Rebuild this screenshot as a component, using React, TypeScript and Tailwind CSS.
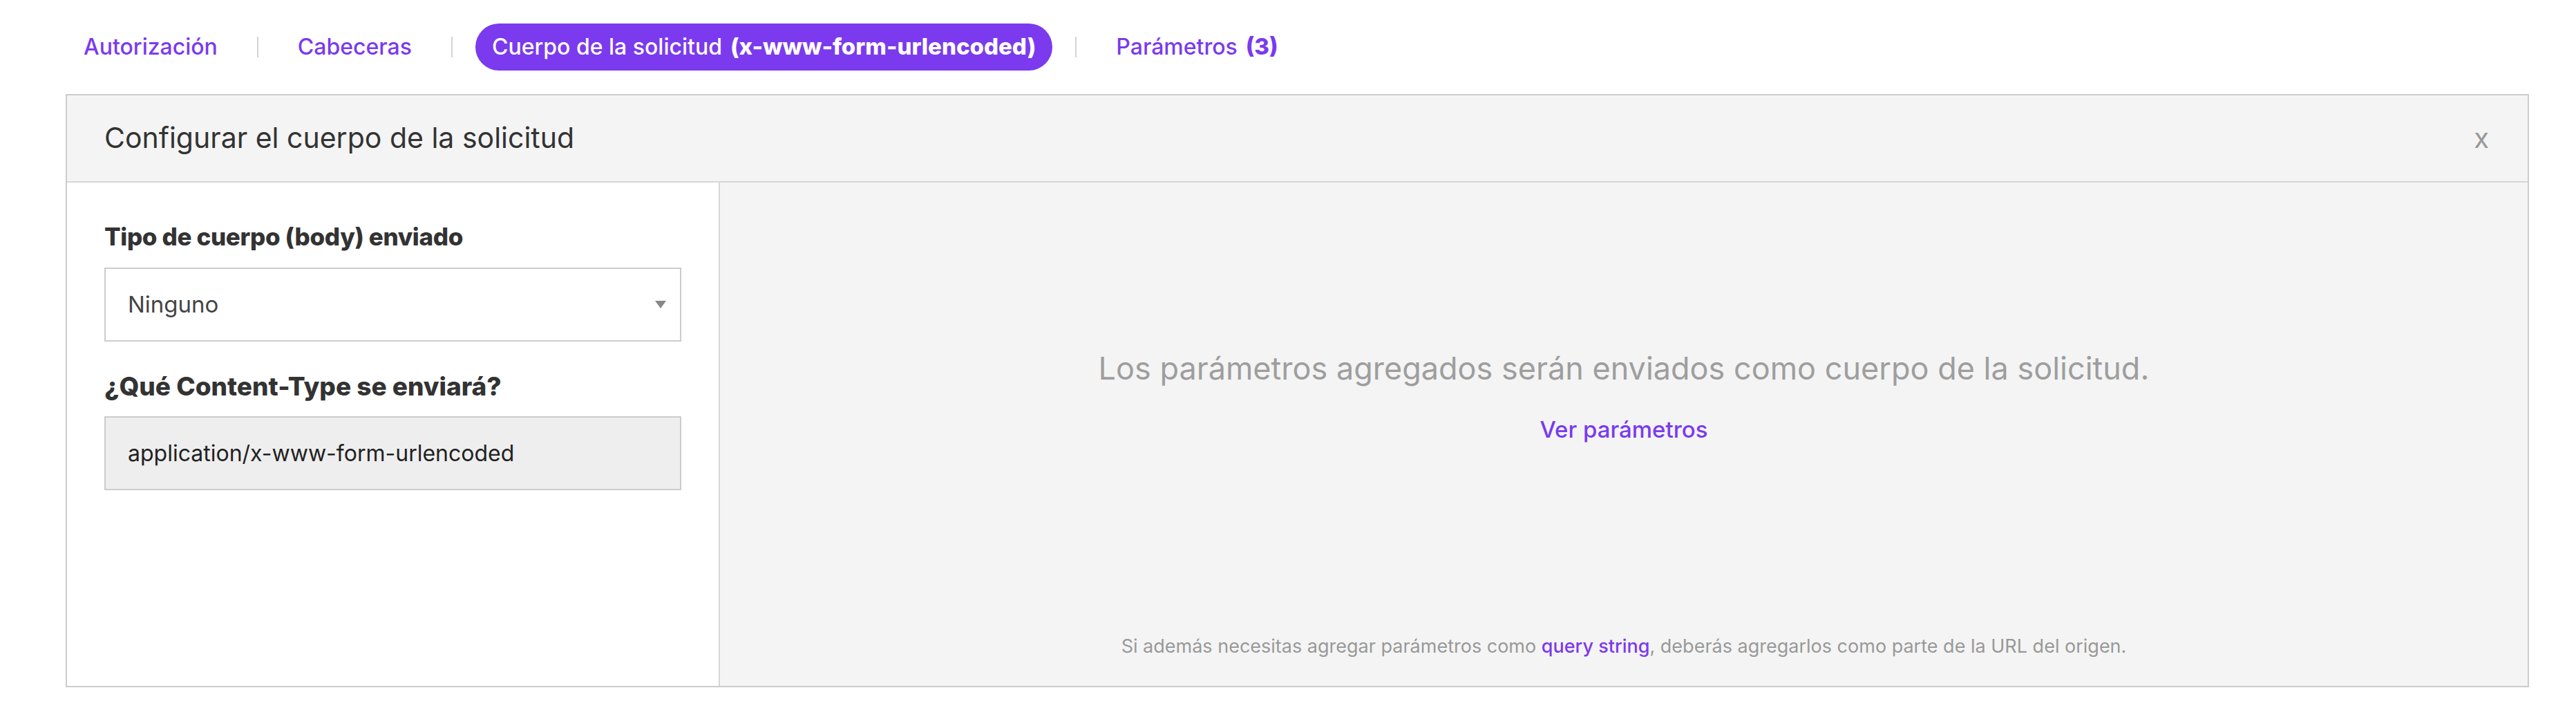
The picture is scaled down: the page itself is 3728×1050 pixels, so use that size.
import React from 'react';

const tabs = [
    { label: 'Autorización' },
    { label: 'Cabeceras' },
    { label: 'Cuerpo de la solicitud', extra: '(x-www-form-urlencoded)', active: true },
    { label: 'Parámetros', extra: '(3)' },
];

const Tabs = () => (
    <div className="flex items-center h-[68px]">
        {tabs.map((t, i) => (
            <React.Fragment key={t.label}>
                {i > 0 && <span className="w-[2px] h-[30px] bg-[#d4d4d4] mx-[33px]" />}
                <span
                    className={
                        t.active
                            ? 'h-[68px] px-[24px] flex items-center rounded-full bg-[#7b3aee] text-white text-[32px] font-medium'
                            : 'px-[24px] flex items-center text-[#7b3aee] text-[32px] font-medium'
                    }
                >
                    {t.label}
                    {t.extra && <span className="font-extrabold text-[33px] ml-[12px]">{t.extra}</span>}
                </span>
            </React.Fragment>
        ))}
    </div>
);

const App: React.FC = () => {
    return (
        <div className="min-h-screen bg-white font-['Inter',sans-serif]">
            <div className="pl-[97px] pr-[68px] pt-[34px]">
                <Tabs />
            </div>

            {/* Panel */}
            <div className="ml-[95px] mr-[68px] mt-[34px] border-2 border-[#cccccc]">
                {/* Header */}
                <div className="h-[126px] bg-[#f4f4f4] border-b-2 border-[#d6d6d6] flex items-center justify-between pl-[54px] pr-[56px]">
                    <h2 className="text-[41px] text-[#333333] font-normal">Configurar el cuerpo de la solicitud</h2>
                    <span className="text-[40px] text-[#999999] leading-none">x</span>
                </div>

                {/* Body */}
                <div className="flex h-[728px]">
                    <div className="w-[945px] shrink-0 bg-white border-r-2 border-[#d6d6d6] px-[54px] pt-[58px]">
                        <p className="text-[35px] font-extrabold text-[#333333] leading-[41px] tracking-[-0.01em]">Tipo de cuerpo (body) enviado</p>
                        <div className="mt-[24px] h-[107px] border-2 border-[#cccccc] bg-white flex items-center justify-between pl-[32px] pr-[20px]">
                            <span className="text-[33px] text-[#444444]">Ninguno</span>
                            <svg width="16" height="11" viewBox="0 0 16 11">
                                <polygon points="0,0 16,0 8,11" fill="#888888" />
                            </svg>
                        </div>
                        <p className="mt-[44px] text-[37px] font-extrabold text-[#333333] leading-[41px]">¿Qué Content-Type se enviará?</p>
                        <div className="mt-[23px] h-[107px] border-2 border-[#cccccc] bg-[#eeeeee] flex items-center pl-[32px]">
                            <span className="text-[32px] text-[#222222]">application/x-www-form-urlencoded</span>
                        </div>
                    </div>

                    <div className="flex-1 bg-[#f4f4f4] flex flex-col items-center pt-[241px] pb-[40px]">
                        <p className="text-[45px] text-[#9e9e9e] leading-[56px]">Los parámetros agregados serán enviados como cuerpo de la solicitud.</p>
                        <a className="mt-[40px] text-[33px] font-medium text-[#7b3aee] leading-[40px] cursor-pointer">Ver parámetros</a>
                        <p className="mt-auto text-[27px] text-[#999999] leading-[34px]">
                            Si además necesitas agregar parámetros como <a className="text-[#7b3aee] font-medium cursor-pointer">query string</a>, deberás agregarlos como parte de la URL del origen.
                        </p>
                    </div>
                </div>
            </div>
        </div>
    );
};

export default App;
